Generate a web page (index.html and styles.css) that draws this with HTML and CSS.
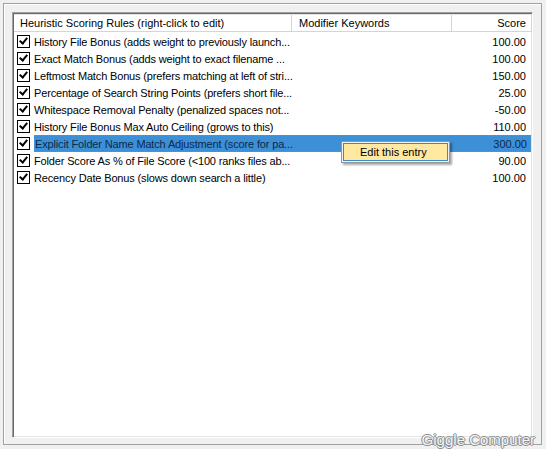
FILE: index.html
```html
<!DOCTYPE html>
<html>
<head>
<meta charset="utf-8">
<link rel="stylesheet" href="styles.css">
</head>
<body>
<div class="frame">
  <div class="list">
    <div class="header">
      <div class="hcell c1">Heuristic Scoring Rules (right-click to edit)</div>
      <div class="hcell c2">Modifier Keywords</div>
      <div class="hcell c3">Score</div>
    </div>
    <div class="rows">
      <div class="row"><span class="cb"></span><span class="name">History File Bonus (adds weight to previously launch...</span><span class="kw"></span><span class="score">100.00</span></div>
      <div class="row"><span class="cb"></span><span class="name">Exact Match Bonus (adds weight to exact filename ...</span><span class="kw"></span><span class="score">100.00</span></div>
      <div class="row"><span class="cb"></span><span class="name">Leftmost Match Bonus (prefers matching at left of stri...</span><span class="kw"></span><span class="score">150.00</span></div>
      <div class="row"><span class="cb"></span><span class="name">Percentage of Search String Points (prefers short file...</span><span class="kw"></span><span class="score">25.00</span></div>
      <div class="row"><span class="cb"></span><span class="name">Whitespace Removal Penalty (penalized spaces not...</span><span class="kw"></span><span class="score">-50.00</span></div>
      <div class="row"><span class="cb"></span><span class="name">History File Bonus Max Auto Ceiling (grows to this)</span><span class="kw"></span><span class="score">110.00</span></div>
      <div class="row selected"><span class="cb"></span><div class="sel"><span class="name">Explicit Folder Name Match Adjustment (score for pa...</span><span class="kw"></span><span class="score">300.00</span></div></div>
      <div class="row"><span class="cb"></span><span class="name">Folder Score As % of File Score (&lt;100 ranks files ab...</span><span class="kw"></span><span class="score">90.00</span></div>
      <div class="row"><span class="cb"></span><span class="name">Recency Date Bonus (slows down search a little)</span><span class="kw"></span><span class="score">100.00</span></div>
    </div>
    <div class="menu"><div class="item">Edit this entry</div></div>
  </div>
  <div class="watermark">Giggle Computer</div>
</div>
</body>
</html>
```
FILE: styles.css
```css
html, body { margin: 0; padding: 0; }
body {
  width: 546px; height: 449px;
  background: #f0f0f0;
  font-family: "Liberation Sans", Arial, sans-serif;
  font-size: 11px;
  color: #000;
  overflow: hidden;
  position: relative;
}
.frame {
  position: absolute; left: 3px; top: 3px;
  border: 1px solid #a0a0a0;
  box-shadow: inset 1px 1px 0 #fff;
  padding: 8px 8px 6px 8px;
  box-sizing: border-box;
  width: 539px; height: 442px;
}
.list {
  position: relative;
  height: 100%;
  background: #fff;
  border-style: solid;
  border-width: 1px;
  border-color: #a0a0a0 #fff #fff #a0a0a0;
  box-shadow: inset 1px 1px 0 #696969, inset -1px -1px 0 #e3e3e3;
  padding: 1px;
  box-sizing: border-box;
}
.header {
  display: grid;
  grid-template-columns: 278px 160px 80px;
  height: 17px;
  border-top: 1px solid #e5e5e5;
}
.hcell {
  height: 16px;
  line-height: 16px;
  border-right: 1px solid #d5d5d5;
  border-bottom: 1px solid #d5d5d5;
  padding-left: 6px;
  white-space: nowrap;
  overflow: hidden;
  background: #fff;
}
.hcell.c2 { padding-left: 7px; }
.hcell.c3 { text-align: right; padding-right: 5px; }
.rows { padding-top: 1px; }
.row {
  display: grid;
  grid-template-columns: 19px 258px 160px 80px;
  height: 17px;
  align-items: center;
}
.row > .sel {
  grid-column: 2 / 5;
  display: grid;
  grid-template-columns: 258px 160px 80px;
  align-items: center;
  height: 17px;
  background: #3d8fd6;
  color: #0c2a4d;
  outline: 1px dotted #d9731f;
  outline-offset: -1px;
  margin-left: 1px;
}
.cb {
  width: 11px; height: 11px;
  border: 1px solid #000;
  margin-left: 3px;
  background: #fff;
  position: relative;
}
.cb::after {
  content: "";
  position: absolute;
  left: 3px; top: 0px;
  width: 3px; height: 6px;
  border: solid #000;
  border-width: 0 2px 2px 0;
  transform: rotate(40deg);
}
.name { padding-left: 1px; white-space: nowrap; overflow: visible; letter-spacing: -0.15px; }
.score { text-align: right; padding-right: 5px; }
.menu {
  position: absolute;
  left: 328px; top: 128px;
  width: 109px; height: 22px;
  background: #f0f0f0;
  border: 1px solid #979797;
  box-sizing: border-box;
  padding: 1px;
  box-shadow: 2px 2px 2px rgba(0,0,0,0.35);
}
.item {
  height: 18px;
  line-height: 16px;
  background: #ffe8a0;
  border: 1px solid #3c8ad0;
  box-sizing: border-box;
  padding-left: 16px;
  color: #000;
}
.watermark {
  position: absolute;
  right: 6px; bottom: -4px;
  font-family: "Liberation Sans", sans-serif;
  font-size: 15px;
  color: #f4f4f4;
  text-shadow: -1px 0 #8e8e8e, 1px 0 #8e8e8e, 0 -1px #8e8e8e, 0 1px #8e8e8e;
}
```
